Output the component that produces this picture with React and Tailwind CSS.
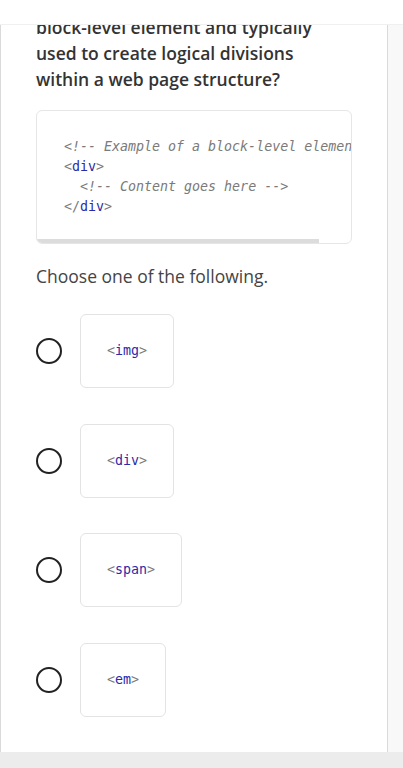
import React from 'react';

const mono = { fontFamily: '"DejaVu Sans Mono", "Liberation Mono", monospace' };

// Tag - gray brackets, blue name
const Tag = ({ name, close }) => (
  <>
    <span className="text-[#7a7a7a]">{close ? '</' : '<'}</span>
    <span className="text-[#2b2ba8]">{name}</span>
    <span className="text-[#7a7a7a]">{'>'}</span>
  </>
);

const Comment = ({ children }) => (
  <span className="italic text-[#7a7a7a]">{children}</span>
);

const CodeBlock = () => (
  <div className="mt-[18px] w-[316px] h-[134px] rounded-md border border-[#e6e6e6] bg-white overflow-hidden flex flex-col">
    <div className="flex-1 pt-[26px] pl-[27px] text-[13.3px] leading-[20px] whitespace-pre overflow-hidden" style={mono}>
      <div><Comment>{'<!-- Example of a block-level element -->'}</Comment></div>
      <div><Tag name="div" /></div>
      <div>{'  '}<Comment>{'<!-- Content goes here -->'}</Comment></div>
      <div><Tag name="div" close /></div>
    </div>
    <div className="h-[4px] w-[282px] bg-[#dcdcdc]" />
  </div>
);

const Option = ({ name }) => (
  <div className="flex items-center gap-[18px]">
    <div className="w-[26px] h-[26px] rounded-full border-2 border-[#222] shrink-0" />
    <div className="rounded-md border border-[#e3e3e3] bg-white px-[26px] py-[26px] text-[13.3px] leading-[20px]" style={mono}>
      <Tag name={name} />
    </div>
  </div>
);

export default function App() {
  const options = ['img', 'div', 'span', 'em'];

  return (
    <div className="w-[403px] h-[768px] flex flex-col bg-white overflow-hidden" style={{ fontFamily: '"Open Sans", sans-serif' }}>
      {/* top strip */}
      <div className="h-[25px] shrink-0 bg-white border-b border-[#f0f0f0]" />

      <div className="flex flex-1 min-h-0">
        {/* question card */}
        <div className="w-[388px] shrink-0 border-l border-r border-[#dadada] bg-white overflow-hidden">
          <div className="-mt-[37px] pl-[35px] pr-[35px]">
            <h2 className="text-[17.5px] leading-[26px] font-semibold text-[#333]">
              <span className="block">Which HTML element is a</span>
              <span className="block">block-level element and typically</span>
              <span className="block">used to create logical divisions</span>
              <span className="block">within a web page structure?</span>
            </h2>

            <CodeBlock />

            <p className="mt-[19px] text-[17.5px] leading-[26px] text-[#444]">
              Choose one of the following.
            </p>

            <div className="mt-[25px] flex flex-col gap-[35.5px]">
              {options.map((o) => (
                <Option key={o} name={o} />
              ))}
            </div>
          </div>
        </div>

        {/* side gutter */}
        <div className="flex-1 bg-[#f8f8f8]" />
      </div>

      {/* bottom band */}
      <div className="h-[16px] shrink-0 bg-[#ececec]" />
    </div>
  );
}
